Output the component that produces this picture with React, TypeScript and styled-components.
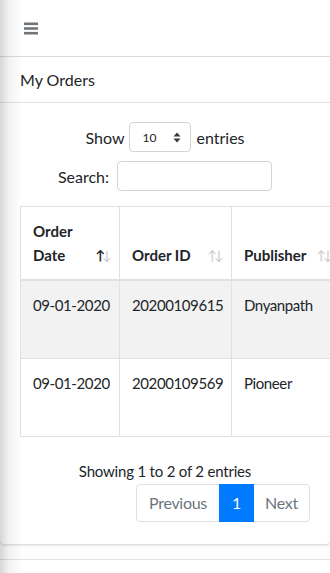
import React from "react";
import styled, { createGlobalStyle } from "styled-components";

const Global = createGlobalStyle`
  html, body { margin: 0; padding: 0; background: #ffffff; }
  body { font-family: "Lato", "Liberation Sans", sans-serif; color: #212529; font-size: 16px; }
  * { box-sizing: border-box; }
`;

const Page = styled.div`
  position: relative;
  width: 330px;
  height: 573px;
  overflow: hidden;
  background: #fdfdfd;
`;

const LeftShadow = styled.div`
  position: absolute;
  left: 0;
  top: 0;
  bottom: 0;
  width: 22px;
  background: linear-gradient(to right, rgba(0,0,0,0.16), rgba(0,0,0,0.05) 40%, rgba(0,0,0,0));
  pointer-events: none;
  z-index: 5;
`;

const Navbar = styled.div`
  height: 57px;
  background: #fff;
  border-bottom: 1px solid #dee2e6;
  display: flex;
  align-items: center;
  padding-left: 24px;
`;

const Card = styled.div`
  background: #fff;
  box-shadow: 0 1px 3px rgba(0,0,0,0.18);
  border-radius: 0 0 4px 4px;
`;

const CardHeader = styled.div`
  height: 46px;
  border-bottom: 1px solid #dee2e6;
  display: flex;
  align-items: center;
  padding-left: 20px;
  font-size: 16px;
  color: #212529;
`;

const CardBody = styled.div`
  padding: 19px 0 22px 20px;
  overflow: hidden;
`;

const Row = styled.div<{ $gapTop?: number }>`
  display: flex;
  align-items: center;
  justify-content: center;
  gap: 4px;
  padding-right: 20px;
  font-size: 16px;
  margin-top: ${(p) => p.$gapTop ?? 0}px;
`;

const SelectBox = styled.div`
  width: 62px;
  height: 30px;
  border: 1px solid #ced4da;
  border-radius: 4px;
  display: flex;
  align-items: center;
  justify-content: space-between;
  padding: 0 9px 0 12px;
  font-size: 12px;
  margin: 0 1px;
`;

const SearchInput = styled.div`
  width: 155px;
  height: 30px;
  border: 1px solid #ced4da;
  border-radius: 4px;
  margin-left: 4px;
`;

const TableWrap = styled.div`
  margin-top: 15px;
  width: 320px;
`;

const Table = styled.table`
  border-collapse: collapse;
  table-layout: fixed;
  width: 320px;
  border: 1px solid #dee2e6;
`;

const Th = styled.th<{ $w: number }>`
  width: ${(p) => p.$w}px;
  position: relative;
  text-align: left;
  vertical-align: bottom;
  font-weight: 700;
  font-size: 15px;
  line-height: 24px;
  padding: 12px 28px 12px 12px;
  border: 1px solid #dee2e6;
  border-bottom: 2px solid #dee2e6;
  white-space: normal;
`;

const Sort = styled.span`
  position: absolute;
  right: 10px;
  bottom: 14px;
  font-size: 13px;
  font-weight: 400;
  letter-spacing: -3px;
  line-height: 20px;
  white-space: nowrap;
`;

const Arrow = styled.span<{ $on?: boolean }>`
  color: ${(p) => (p.$on ? "#212529" : "#c8c8c8")};
  font-weight: ${(p) => (p.$on ? 700 : 400)};
`;

const Tr = styled.tr<{ $striped?: boolean }>`
  background: ${(p) => (p.$striped ? "#f2f2f2" : "#fff")};
`;

const Td = styled.td`
  height: 78px;
  vertical-align: top;
  padding: 12px;
  font-size: 15px;
  letter-spacing: -0.4px;
  line-height: 24px;
  border: 1px solid #dee2e6;
  white-space: nowrap;
  overflow: hidden;
`;

const Info = styled.div`
  margin-top: 24px;
  text-align: center;
  padding-right: 20px;
  font-size: 15px;
  letter-spacing: -0.2px;
  line-height: 20px;
`;

const Pager = styled.div`
  display: flex;
  justify-content: flex-end;
  padding-right: 20px;
  margin-top: 3px;
`;

const PageBtn = styled.div<{ $active?: boolean; $w: number; $first?: boolean; $last?: boolean }>`
  width: ${(p) => p.$w}px;
  height: 38px;
  display: flex;
  align-items: center;
  justify-content: center;
  font-size: 16px;
  letter-spacing: -0.3px;
  color: ${(p) => (p.$active ? "#fff" : "#6c757d")};
  background: ${(p) => (p.$active ? "#007bff" : "#fff")};
  border: 1px solid ${(p) => (p.$active ? "#007bff" : "#dee2e6")};
  margin-left: ${(p) => (p.$first ? 0 : -1)}px;
  border-radius: ${(p) => (p.$first ? "4px 0 0 4px" : p.$last ? "0 4px 4px 0" : "0")};
  position: relative;
  z-index: ${(p) => (p.$active ? 1 : 0)};
`;

const Footer = styled.div`
  margin-top: 15px;
  border-top: 1px solid #dee2e6;
  height: 20px;
  background: #fff;
`;

const Hamburger = () => (
  <svg width="14" height="13" viewBox="0 0 14 13">
    <rect x="0" y="0.5" width="14" height="2.6" fill="#6f757b" />
    <rect x="0" y="5.2" width="14" height="2.6" fill="#6f757b" />
    <rect x="0" y="9.9" width="14" height="2.6" fill="#6f757b" />
  </svg>
);

const Caret = () => (
  <svg width="8" height="11" viewBox="0 0 8 11">
    <path d="M4 0.5 L7.5 4.5 H0.5 Z" fill="#343a40" />
    <path d="M4 10.5 L7.5 6.5 H0.5 Z" fill="#343a40" />
  </svg>
);

const rows = [
  ["09-01-2020", "20200109615", "Dnyanpath"],
  ["09-01-2020", "20200109569", "Pioneer"],
];

const headers: [string, number, boolean][] = [
  ["Order Date", 99, true],
  ["Order ID", 112, false],
  ["Publisher", 109, false],
];

export default function App() {
  return (
    <Page>
      <Global />
      <LeftShadow />
      <Navbar>
        <Hamburger />
      </Navbar>
      <Card>
        <CardHeader>My Orders</CardHeader>
        <CardBody>
          <Row>
            <span>Show</span>
            <SelectBox>
              <span>10</span>
              <Caret />
            </SelectBox>
            <span>entries</span>
          </Row>
          <Row $gapTop={9}>
            <span>Search:</span>
            <SearchInput />
          </Row>
          <TableWrap>
            <Table>
              <thead>
                <tr>
                  {headers.map(([label, w, on]) => (
                    <Th key={label} $w={w}>
                      {label}
                      <Sort>
                        <Arrow $on={on}>↑</Arrow>
                        <Arrow>↓</Arrow>
                      </Sort>
                    </Th>
                  ))}
                </tr>
              </thead>
              <tbody>
                {rows.map((r, i) => (
                  <Tr key={i} $striped={i === 0}>
                    {r.map((c, j) => (
                      <Td key={j}>{c}</Td>
                    ))}
                  </Tr>
                ))}
              </tbody>
            </Table>
          </TableWrap>
          <Info>Showing 1 to 2 of 2 entries</Info>
          <Pager>
            <PageBtn $w={84} $first>Previous</PageBtn>
            <PageBtn $w={35} $active>1</PageBtn>
            <PageBtn $w={57} $last>Next</PageBtn>
          </Pager>
        </CardBody>
      </Card>
      <Footer />
    </Page>
  );
}
